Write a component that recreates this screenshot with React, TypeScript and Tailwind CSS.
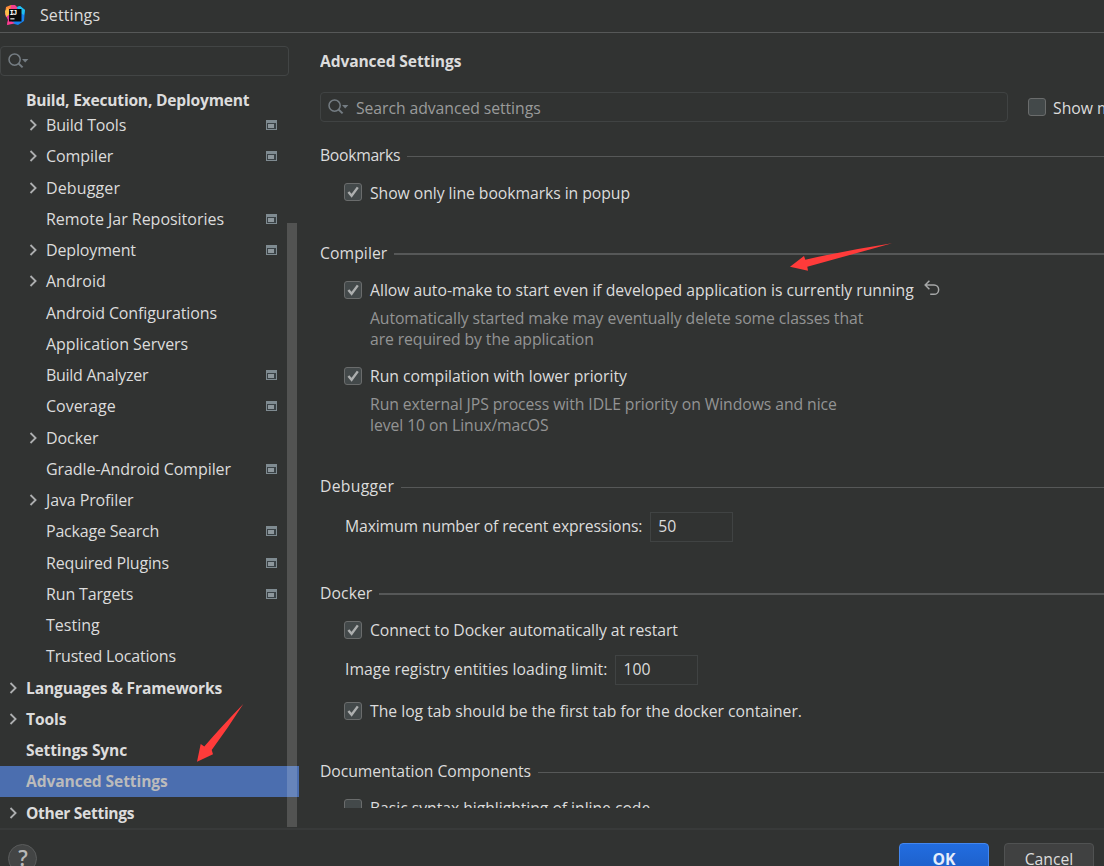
import React from "react";

type TreeRow = { label: string; track: string; child?: boolean; arrow?: boolean; badge?: boolean; selected?: boolean };

const rows: TreeRow[] = [
  { label: "Build Tools", track: "tracking-[-0.16px]", child: true, arrow: true, badge: true },
  { label: "Compiler", track: "tracking-[-0.08px]", child: true, arrow: true, badge: true },
  { label: "Debugger", track: "tracking-[0.12px]", child: true, arrow: true },
  { label: "Remote Jar Repositories", track: "tracking-[-0.02px]", child: true, badge: true },
  { label: "Deployment", track: "tracking-[-0.15px]", child: true, arrow: true, badge: true },
  { label: "Android", track: "tracking-[0px]", child: true, arrow: true },
  { label: "Android Configurations", track: "tracking-[-0.12px]", child: true },
  { label: "Application Servers", track: "tracking-[-0.05px]", child: true },
  { label: "Build Analyzer", track: "tracking-[-0.28px]", child: true, badge: true },
  { label: "Coverage", track: "tracking-[-0.02px]", child: true, badge: true },
  { label: "Docker", track: "tracking-[-0.06px]", child: true, arrow: true },
  { label: "Gradle-Android Compiler", track: "tracking-[-0.08px]", child: true, badge: true },
  { label: "Java Profiler", track: "tracking-[-0.12px]", child: true, arrow: true },
  { label: "Package Search", track: "tracking-[-0.2px]", child: true, badge: true },
  { label: "Required Plugins", track: "tracking-[-0.17px]", child: true, badge: true },
  { label: "Run Targets", track: "tracking-[-0.15px]", child: true, badge: true },
  { label: "Testing", track: "tracking-[0px]", child: true },
  { label: "Trusted Locations", track: "tracking-[-0.17px]", child: true },
  { label: "Languages & Frameworks", track: "tracking-[-0.16px] pt-[2px]", arrow: true },
  { label: "Tools", track: "tracking-[-0.1px] pt-[2px]", arrow: true },
  { label: "Settings Sync", track: "tracking-[-0.12px] pt-[2px]" },
  { label: "Advanced Settings", track: "tracking-[-0.09px]", selected: true },
  { label: "Other Settings", track: "tracking-[-0.32px] pt-[2px]", arrow: true },
];

function Logo() {
  return (
    <svg width="20" height="20" viewBox="0 0 20 20" className="shrink-0">
      <path d="M1 2 6 0l4 2 2 6-8 6-4-5z" fill="#fd8a3b" />
      <path d="M6 0h4l3 3-4 6-4-3z" fill="#f6408d" />
      <path d="M0 9l4-4 5 6-2 7-5 2 1-5z" fill="#e8379b" />
      <path d="M0 6l3-3 2 6-4 3z" fill="#fcc04a" />
      <path d="M12 2l3-1 5 4-1 11-6 4-7-2 7-8z" fill="#1583f2" />
      <path d="M12 2l3-1 5 4-1 5-5-3z" fill="#21c0ee" />
      <path d="M2 20l1-5 7 3-3 1z" fill="#fb3c8f" />
      <rect x="4" y="4" width="12.5" height="12.5" fill="#0a0a0a" />
      <rect x="5.3" y="13.3" width="4.2" height="1.1" fill="#fff" />
      <text x="4.6" y="10.4" fontSize="7.5" fontWeight="700" fontFamily="Liberation Mono, monospace" fill="#fff" textLength="7.6">IJ</text>
    </svg>
  );
}

function SearchIcon() {
  return (
    <svg width="22" height="16" viewBox="0 0 22 16" fill="none" className="shrink-0">
      <circle cx="6.6" cy="6.6" r="5.6" stroke="#747c82" strokeWidth="1.5" />
      <path d="M10.5 10.5 14.6 14.4" stroke="#747c82" strokeWidth="2" />
      <path d="M14 6.1h6.4l-3.2 3.5z" fill="#747c82" />
    </svg>
  );
}

function Chevron() {
  return (
    <svg width="8" height="12" viewBox="0 0 8 12" fill="none" className="shrink-0">
      <path d="M1.5 1 6.6 6 1.5 11" stroke="#adafb0" strokeWidth="1.8" />
    </svg>
  );
}

function ProjectBadge() {
  return (
    <svg width="11" height="10" viewBox="0 0 11 10" shapeRendering="crispEdges" className="shrink-0">
      <rect width="11" height="10" fill="#7f8b91" />
      <rect x="1" y="3" width="9" height="6" fill="#3a4246" />
      <rect x="2" y="4" width="6" height="4" fill="#8d979c" />
    </svg>
  );
}

function Check({ on = true }: { on?: boolean }) {
  return (
    <span className="flex h-[18px] w-[18px] shrink-0 items-center justify-center rounded-[3px] border border-[#6a6c6c] bg-[#43494a]">
      {on && (
        <svg width="16" height="16" viewBox="0 0 16 16" fill="none">
          <path d="M3.4 8 6.6 11.8 12.8 3.4" stroke="#adafaf" strokeWidth="2.4" />
        </svg>
      )}
    </span>
  );
}

function Section({ title, top, track, thick }: { title: string; top: string; track: string; thick?: boolean }) {
  return (
    <div className={`flex h-6 ${top}`}>
      <span className={`leading-6 whitespace-nowrap ${track}`}>{title}</span>
      <span className={`ml-[7px] flex-1 bg-[#565858] ${thick ? "mt-3 h-[2px]" : "mt-[13px] h-px"}`} />
    </div>
  );
}

function Option({ label, top, track, on, reset }: { label: string; top: string; track: string; on?: boolean; reset?: boolean }) {
  return (
    <div className={`flex h-6 items-center pl-6 ${top}`}>
      <Check on={on} />
      <span className={`ml-2 leading-6 whitespace-nowrap ${track}`}>{label}</span>
      {reset && (
        <svg width="16" height="16" viewBox="0 0 16 16" fill="none" className="ml-[10px] mb-1 shrink-0">
          <path d="M1.2 5H10a4.6 4.6 0 0 1 0 9.3H6.2M5.4.8 1.2 5l4.2 4.2" stroke="#a6a8a8" strokeWidth="1.5" />
        </svg>
      )}
    </div>
  );
}

function Field({ label, value, top, track }: { label: string; value: string; top: string; track: string }) {
  return (
    <div className={`flex h-[30px] items-center pl-[25px] ${top}`}>
      <span className={`whitespace-nowrap ${track}`}>{label}</span>
      <span className="ml-2 flex h-[30px] w-[83px] items-center border border-[#404343] pl-[7px]">{value}</span>
    </div>
  );
}

export default function App() {
  return (
    <div className="relative flex h-[866px] w-[1104px] flex-col overflow-hidden bg-[#313332] font-['Open_Sans','Noto_Sans',sans-serif] text-[15.75px] text-[#dcdcdc]">
      <header className="flex h-[33px] shrink-0 items-center border-b border-[#565858] pl-[5px] pb-[3px]">
        <Logo />
        <span className="ml-[15px] text-base tracking-[0.1px]">Settings</span>
      </header>

      <div className="flex h-[795px] shrink-0">
        <aside className="relative w-[299px] shrink-0 pt-[13px]">
          <div className="flex h-[30px] w-[289px] items-start rounded-[4px] border border-[#424545] pt-[6px] pl-[7px]">
            <SearchIcon />
          </div>
          <div className="mt-3 flex h-[21.5px] items-center pt-1 pl-[26px] text-[15.6px] font-bold tracking-[-0.21px]">
            Build, Execution, Deployment
          </div>
          <div>
            {rows.map((r) => (
              <div
                key={r.label}
                className={`flex h-[31.25px] items-center ${r.child ? "pl-[29px] text-base" : "pl-[9px] text-[15.6px] font-bold"} ${r.selected ? "bg-[#4b6eaf] text-[#bbbbbb]" : ""}`}
              >
                <span className="flex w-[17px] shrink-0 items-center">{r.arrow && <Chevron />}</span>
                <span className={`flex-1 whitespace-nowrap ${r.track}`}>{r.label}</span>
                {r.badge && <span className="mr-[22px]"><ProjectBadge /></span>}
              </div>
            ))}
          </div>
          <div className="absolute top-[190px] left-[287px] h-[604px] w-[10px] bg-white/16" />
        </aside>

        <main className="ml-[21px] h-[775px] min-w-0 flex-1 overflow-hidden">
          <h1 className="mt-4 h-6 text-[15.6px] leading-6 font-bold tracking-[-0.11px]">Advanced Settings</h1>
          <div className="mt-[19px] flex h-[30px] items-center">
            <div className="flex h-[30px] w-[688px] shrink-0 items-start rounded-[4px] border border-[#404343] pt-[6px] pl-[7px]">
              <SearchIcon />
              <span className="-mt-[3px] ml-[6px] leading-6 tracking-[-0.06px] text-[#9a9b9b]">Search advanced settings</span>
            </div>
            <span className="ml-5"><Check on={false} /></span>
            <span className="ml-[7px] pt-[3px] whitespace-nowrap">Show modified only</span>
          </div>

          <Section title="Bookmarks" top="mt-[21px]" track="tracking-[-0.31px]" />
          <Option label="Show only line bookmarks in popup" top="mt-[13px]" track="tracking-[-0.06px] pt-px" />

          <Section title="Compiler" top="mt-[37px]" track="tracking-[0.06px]" thick />
          <Option label="Allow auto-make to start even if developed application is currently running" top="mt-[13px]" track="tracking-[-0.03px]" reset />
          <p className="mt-[6px] pl-[50px] leading-[21px] tracking-[-0.09px] text-[#939494]">
            Automatically started make may eventually delete some classes that
            <br />
            are required by the application
          </p>
          <Option label="Run compilation with lower priority" top="mt-[14px]" track="tracking-[-0.03px]" />
          <p className="mt-[6px] pl-[50px] leading-[21px] tracking-[-0.075px] text-[#939494]">
            Run external JPS process with IDLE priority on Windows and nice
            <br />
            level 10 on Linux/macOS
          </p>

          <Section title="Debugger" top="mt-[38px]" track="tracking-[0.28px]" />
          <Field label="Maximum number of recent expressions:" value="50" top="mt-[14px]" track="tracking-[-0.145px]" />

          <Section title="Docker" top="mt-[39px]" track="tracking-[0.06px]" thick />
          <Option label="Connect to Docker automatically at restart" top="mt-[13px]" track="tracking-[-0.06px]" />
          <Field label="Image registry entities loading limit:" value="100" top="mt-[13px]" track="tracking-[0.035px]" />
          <Option label="The log tab should be the first tab for the docker container." top="mt-[14px]" track="tracking-[-0.02px]" />

          <Section title="Documentation Components" top="mt-[36px]" track="tracking-[-0.07px]" />
          <Option label="Basic syntax highlighting of inline code" top="mt-[13px]" track="tracking-[-0.05px]" on={false} />
        </main>
      </div>

      <footer className="flex h-[60px] shrink-0 items-start border-t-2 border-[#383a3a] pt-[13px] pr-[10px] pl-2">
        <span className="mt-px flex h-[29px] w-[29px] items-center justify-center rounded-full border border-[#5a5c5c] bg-[#434545] pl-px text-[21px] font-semibold text-[#b8b8b8]">?</span>
        <div className="ml-auto flex gap-[15px]">
          <button className="h-[34px] w-[90px] rounded-[4px] border border-[#4387f0] bg-linear-to-b from-[#226de0] to-[#1c5cc4] font-bold text-[#e6eefb]">OK</button>
          <button className="h-[34px] w-[90px] rounded-[4px] border border-[#505252] bg-[#404141]">Cancel</button>
        </div>
      </footer>

      <svg width="1104" height="866" viewBox="0 0 1104 866" className="pointer-events-none absolute inset-0" fill="#ff3b3a">
        <path d="M197 761.8 200.7 744l3.6 2.4Q222 726 243.3 704 228 728 211.7 750l1.3 4.3z" />
        <path d="M790 266.7 804 256l1.3 3.7Q848 250 892 243.2 850 255 807.3 266.7l.7 4z" />
      </svg>
    </div>
  );
}
